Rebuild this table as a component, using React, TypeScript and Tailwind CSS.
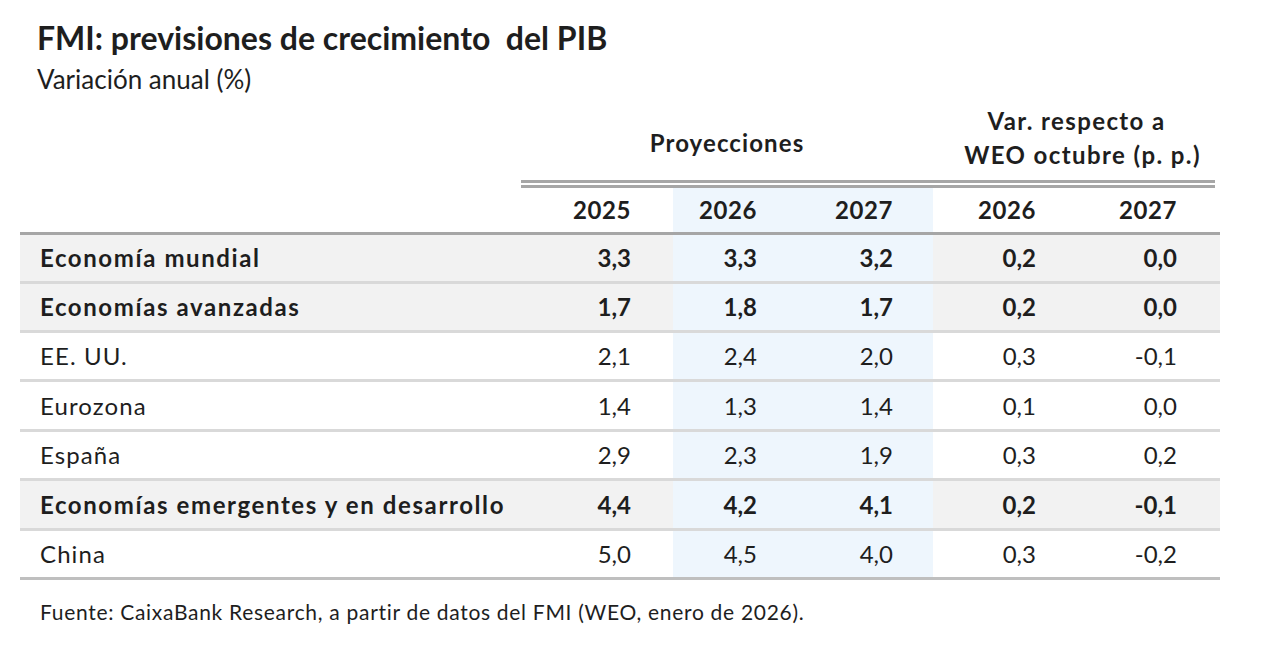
import React from "react";

type Row = { label: string; bold: boolean; gray: boolean; v: string[]; h: string };

const rows: Row[] = [
  { label: "Economía mundial", bold: true, gray: true, v: ["3,3", "3,3", "3,2", "0,2", "0,0"], h: "h-[46px]" },
  { label: "Economías avanzadas", bold: true, gray: true, v: ["1,7", "1,8", "1,7", "0,2", "0,0"], h: "h-[46px]" },
  { label: "EE. UU.", bold: false, gray: false, v: ["2,1", "2,4", "2,0", "0,3", "-0,1"], h: "h-[46px]" },
  { label: "Eurozona", bold: false, gray: false, v: ["1,4", "1,3", "1,4", "0,1", "0,0"], h: "h-[47px]" },
  { label: "España", bold: false, gray: false, v: ["2,9", "2,3", "1,9", "0,3", "0,2"], h: "h-[46px]" },
  { label: "Economías emergentes y en desarrollo", bold: true, gray: true, v: ["4,4", "4,2", "4,1", "0,2", "-0,1"], h: "h-[47px]" },
  { label: "China", bold: false, gray: false, v: ["5,0", "4,5", "4,0", "0,3", "-0,2"], h: "h-[46px]" },
];

const cols = [
  "w-[152px] pr-[42px]",
  "w-[130px] pr-[46px] bg-[#eef6fd]",
  "w-[130px] pr-[40px] bg-[#eef6fd]",
  "w-[143px] pr-[40px]",
  "w-[144px] pr-[43px]",
];

export default function App() {
  return (
    <div
      className="w-[1272px] h-[665px] bg-white text-[#1e1e1e] overflow-hidden"
      style={{ fontFamily: "Lato, 'Open Sans', sans-serif" }}
    >
      <div className="pl-[37px] pt-[19px]">
        <h1 className="text-[32px] leading-[38px] font-bold whitespace-pre">
          {"FMI: previsiones de crecimiento  del PIB"}
        </h1>
        <p className="mt-[7px] text-[26px] leading-[31px]">Variación anual (%)</p>
      </div>

      <div className="ml-[20px] mt-[9px] w-[1200px]">
        {/* group headers */}
        <div className="flex h-[76px]">
          <div className="w-[501px]" />
          <div className="w-[412px] flex justify-center pt-[22px]">
            <span className="text-[24px] leading-[34px] font-bold tracking-[1.1px]">Proyecciones</span>
          </div>
          <div className="w-[287px] flex flex-col items-center text-[24px] leading-[34px] font-bold tracking-[1.4px]">
            <span>Var. respecto a</span>
            <span className="pl-[12px]">WEO octubre (p. p.)</span>
          </div>
        </div>
        {/* double line */}
        <div className="ml-[501px] w-[694px] h-[8px] border-t-[3px] border-b-[3px] border-[#a6a6a6]" />
        {/* year header */}
        <div className="flex h-[47px] border-b-[3px] border-[#a6a6a6] text-[24px] font-bold tracking-[0.6px]">
          <div className="w-[501px]" />
          {["2025", "2026", "2027", "2026", "2027"].map((y, i) => (
            <div key={i} className={`${cols[i]} flex items-center justify-end`}>
              {y}
            </div>
          ))}
        </div>
        {rows.map((r, ri) => (
          <div
            key={ri}
            className={`flex box-content ${r.h} border-b-[3px] ${
              ri === rows.length - 1 ? "border-[#bfbfbf]" : "border-[#d9d9d9]"
            } ${r.gray ? "bg-[#f2f2f2]" : "bg-white"} text-[24px] ${r.bold ? "font-bold" : "font-normal"}`}
          >
            <div
              className={`w-[501px] flex items-center pl-[20px] ${
                r.bold ? "tracking-[1.6px]" : "tracking-[1.1px]"
              }`}
            >
              {r.label}
            </div>
            {r.v.map((v, i) => (
              <div key={i} className={`${cols[i]} flex items-center justify-end`}>
                {v}
              </div>
            ))}
          </div>
        ))}
        <p className="mt-[18px] pl-[20px] text-[21px] leading-[28px] tracking-[0.7px]">
          Fuente: CaixaBank Research, a partir de datos del FMI (WEO, enero de 2026).
        </p>
      </div>
    </div>
  );
}
